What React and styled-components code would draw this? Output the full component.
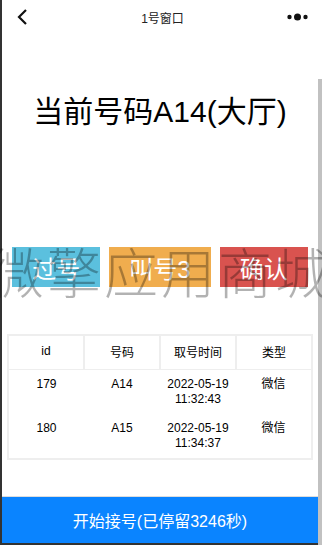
import React from "react";
import styled, { createGlobalStyle } from "styled-components";

const Global = createGlobalStyle`
  html, body { margin: 0; padding: 0; background: #fff; }
  body { font-family: "Liberation Sans", Arial, "Noto Sans CJK SC", sans-serif; }
  * { box-sizing: border-box; }
`;

const Frame = styled.div`
  width: 322px;
  height: 545px;
  display: flex;
  position: relative;
  overflow: hidden;
`;

const Main = styled.div`
  flex: 1;
  display: flex;
  flex-direction: column;
  border-left: 2px solid #333;
  border-bottom: 2px solid #333;
  background: #fff;
`;

const Track = styled.div`
  width: 4px;
  display: flex;
  flex-direction: column;
`;

const Thumb = styled.div`
  margin-top: 79px;
  flex: 1;
  background: #c1c1c1;
`;

const Header = styled.div`
  height: 34px;
  display: flex;
  align-items: center;
  justify-content: space-between;
  padding: 0 8px 0 9px;
`;

const HeaderTitle = styled.div`
  font-size: 12px;
  color: #222;
  margin-left: 4px;
`;

const IconBox = styled.div`
  width: 24px;
  height: 24px;
  display: flex;
  align-items: center;
  justify-content: center;
`;

const Current = styled.h1`
  margin: 60px 0 0;
  font-size: 30px;
  line-height: 36px;
  font-weight: normal;
  text-align: center;
  color: #000;
`;

const Buttons = styled.div`
  margin-top: 117px;
  display: flex;
  justify-content: center;
  gap: 9px;
`;

const Btn = styled.div`
  height: 40px;
  padding: 0 20px;
  display: flex;
  align-items: center;
  justify-content: center;
  color: #fff;
  font-size: 24px;
  background: ${(p) => p.$bg};
  white-space: nowrap;
`;

const Table = styled.table`
  margin: 47px 5px 0;
  width: 306px;
  border-collapse: collapse;
  table-layout: fixed;
  border: 2px solid #eee;
  font-size: 12px;
  color: #000;
`;

const Th = styled.th`
  height: 34px;
  border: 2px solid #eee;
  border-bottom-width: 1px;
  font-weight: normal;
  text-align: center;
  vertical-align: middle;
  padding: 0 0 2px;
`;

const Td = styled.td`
  text-align: center;
  vertical-align: top;
  padding: 7px 4px;
  line-height: 15px;
  height: 43px;
`;

const Spacer = styled.div`
  flex: 1;
`;

const StartBar = styled.div`
  height: 47px;
  border-top: 1px solid #ddd;
  background: #0a84ff;
  color: #fff;
  font-size: 16px;
  display: flex;
  align-items: center;
  justify-content: center;
`;

const Watermark = styled.div`
  position: absolute;
  left: 50%;
  top: 244px;
  transform: translateX(-50%);
  font-size: 54px;
  line-height: 54px;
  letter-spacing: 3px;
  white-space: nowrap;
  font-weight: 300;
  color: rgba(0, 0, 0, 0.3);
  font-family: "Noto Sans CJK SC", sans-serif;
  pointer-events: none;
`;

const rows = [
  { id: 179, no: "A14", date: "2022-05-19", time: "11:32:43", type: "微信" },
  { id: 180, no: "A15", date: "2022-05-19", time: "11:34:37", type: "微信" },
];

export default function App() {
  return (
    <>
      <Global />
      <Frame>
        <Main>
          <Header>
            <IconBox>
              <svg width="14" height="18" viewBox="0 0 14 18">
                <path d="M10 2 L3 9 L10 16" fill="none" stroke="#111" strokeWidth="2.2" />
              </svg>
            </IconBox>
            <HeaderTitle>1号窗口</HeaderTitle>
            <IconBox>
              <svg width="24" height="10" viewBox="0 0 24 10">
                <circle cx="3.5" cy="5" r="2.2" fill="#111" />
                <circle cx="11.5" cy="5" r="3.5" fill="#111" />
                <circle cx="19.5" cy="5" r="2.2" fill="#111" />
              </svg>
            </IconBox>
          </Header>
          <Current>当前号码A14(大厅)</Current>
          <Buttons>
            <Btn $bg="#5bc0de">过号</Btn>
            <Btn $bg="#f0ad4e">叫号3</Btn>
            <Btn $bg="#d9534f">确认</Btn>
          </Buttons>
          <Table>
            <thead>
              <tr>
                <Th>id</Th>
                <Th>号码</Th>
                <Th>取号时间</Th>
                <Th>类型</Th>
              </tr>
            </thead>
            <tbody>
              {rows.map((r) => (
                <tr key={r.id}>
                  <Td>{r.id}</Td>
                  <Td>{r.no}</Td>
                  <Td>
                    {r.date}
                    <br />
                    {r.time}
                  </Td>
                  <Td>{r.type}</Td>
                </tr>
              ))}
            </tbody>
          </Table>
          <Spacer />
          <StartBar>开始接号(已停留3246秒)</StartBar>
        </Main>
        <Track>
          <Thumb />
        </Track>
        <Watermark>微擎应用商城</Watermark>
      </Frame>
    </>
  );
}
